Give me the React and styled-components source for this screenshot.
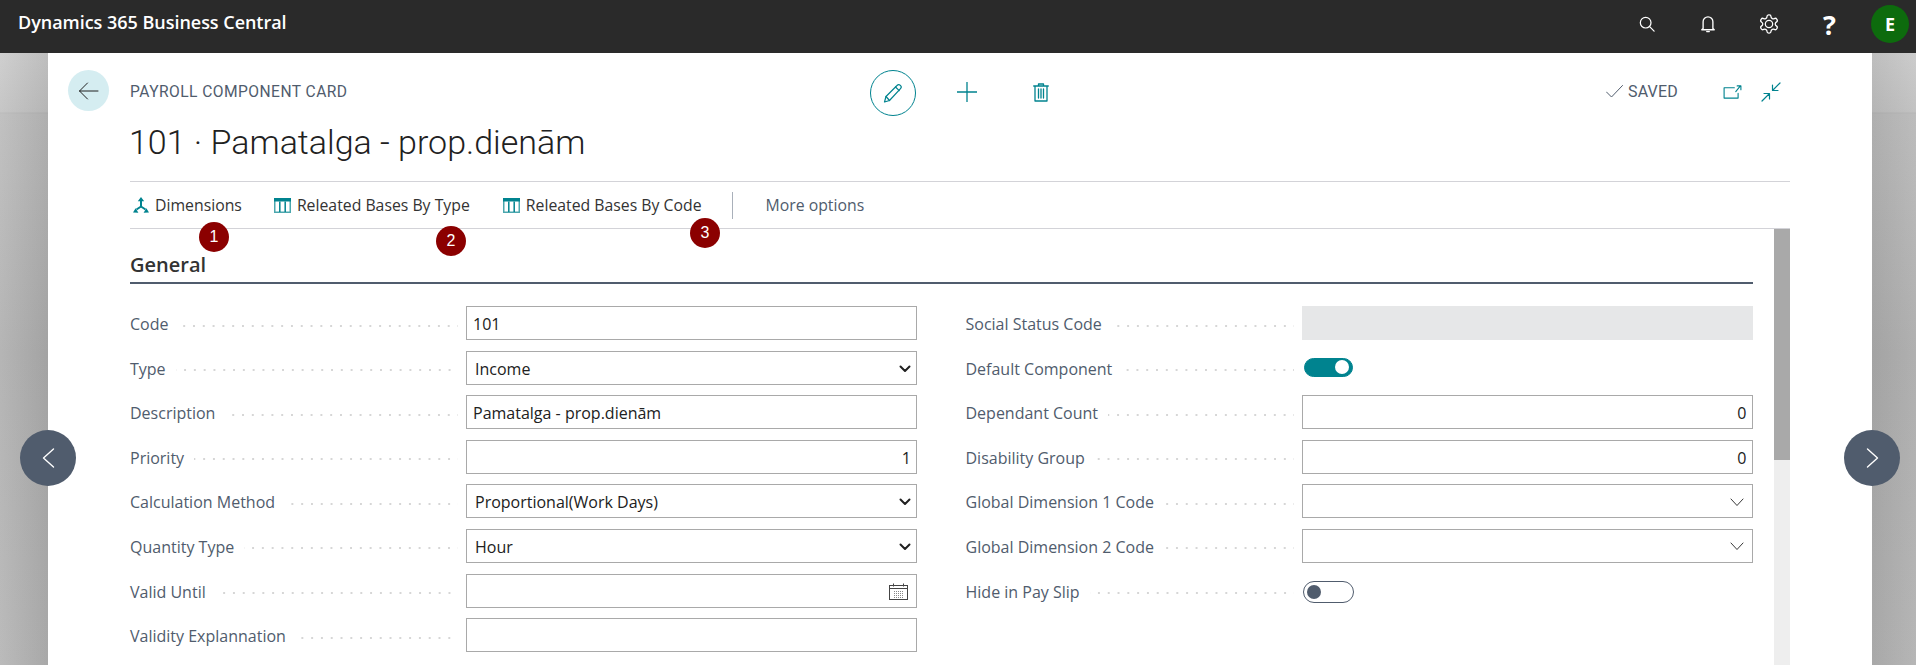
import React from "react";
import styled, { createGlobalStyle } from "styled-components";

const Global = createGlobalStyle`
  html, body { margin: 0; padding: 0; height: 100%; overflow: hidden; background: #bbb; }
  * { box-sizing: border-box; }
  body { font-family: "Open Sans", "Liberation Sans", sans-serif; }
`;

const Page = styled.div`
  width: 1916px; height: 665px; display: flex; flex-direction: column; overflow: hidden;
`;
const TopBar = styled.header`
  height: 53px; flex: none; background: #2a2a2a; display: flex; align-items: center;
  padding: 0 7px 0 18px; color: #fff; position: relative; z-index: 3;
`;
const Brand = styled.div`
  font-size: 18px; font-weight: 600; flex: 1; margin-top: -9px; letter-spacing: -.03px;
`;
const TopIcons = styled.div`display: flex; align-items: center;`;
const TopIcon = styled.div`
  width: 61px; height: 38px; display: flex; align-items: center; justify-content: center;
  color: #fff; margin-top: -5px; font-size: 27px; font-weight: 700;
`;
const Avatar = styled.div`
  width: 38px; height: 38px; border-radius: 50%; background: #0d6b0d; color: #fff; font-weight: 700;
  font-size: 18px; display: flex; align-items: center; justify-content: center; margin: -5px 0 0 11px;
`;
const Backdrop = styled.main`
  flex: 1; min-height: 0; position: relative; padding: 0 44px 0 48px; display: flex;
  background:
    linear-gradient(90deg, rgba(255,255,255,.1), rgba(0,0,0,.06) 48px, rgba(0,0,0,.06) 1872px, rgba(255,255,255,.04)),
    linear-gradient(180deg, #cacaca 0, #c0c0c0 59px, #b4b4b4 60px, #bababa 61px, #adadad 300px, #b3b3b3 100%);
`;
const NavButton = styled.button`
  position: absolute; top: 377px; ${p => p.$side}: ${p => p.$offset}px; width: 56px; height: 56px; border: 0;
  border-radius: 50%; background: #505c6d; color: #fff; display: flex; align-items: center; justify-content: center;
  padding: 0; z-index: 2;
`;
const Card = styled.section`
  flex: 1; background: #fff; display: flex; flex-direction: column; min-width: 0;
`;
const HeaderRow = styled.div`
  margin-top: 17px; padding: 0 20px; height: 46px; display: grid; grid-template-columns: 1fr auto 1fr; align-items: center;
`;
const HeaderLeft = styled.div`display: flex; align-items: center; gap: 21px; align-self: start;`;
const BackButton = styled.button`
  width: 41px; height: 41px; border: 0; border-radius: 50%; background: #d5edf1; color: #212121; padding: 0;
  display: flex; align-items: center; justify-content: center;
`;
const Caption = styled.div`
  font-family: Roboto, "Liberation Sans", sans-serif; font-size: 15.6px; color: #505c6d; letter-spacing: .45px; margin-top: 2px;
`;
const CenterTools = styled.div`display: flex; align-items: center; margin-right: 2px;`;
const EditCircle = styled.button`
  width: 46px; height: 46px; border-radius: 50%; border: 1px solid #00838f; background: #fff; color: #00838f;
  padding: 0; display: flex; align-items: center; justify-content: center;
`;
const ToolIcon = styled.div`
  display: flex; color: #00838f; margin-left: ${p => p.$gap}px; margin-top: ${p => p.$top ?? -2}px;
`;
const HeaderRight = styled.div`
  display: flex; align-items: center; justify-content: flex-end; margin-right: 71px; margin-top: -4px; color: #505c6d;
`;
const Saved = styled.div`
  font-family: Roboto, "Liberation Sans", sans-serif; font-size: 16px; letter-spacing: .2px; margin: 0 45px 0 5px;
`;
const Title = styled.h1`
  margin: 3px 0 0 81px; height: 62px; font-family: Roboto, "Noto Sans", sans-serif; font-weight: 300; font-size: 34px; line-height: 46px; color: #212121;
`;
const ActionBar = styled.nav`
  position: relative; margin: 0 82px; height: 48px; border-top: 1px solid #d3d3d8; border-bottom: 1px solid #d3d3d8;
  display: flex; align-items: center; padding-left: 3px; font-size: 15.8px; color: #333; flex: none;
`;
const Action = styled.div`
  display: flex; align-items: center; gap: ${p => p.$gap || 6}px; margin-right: ${p => p.$mr}px; white-space: nowrap;
`;
const Separator = styled.div`
  width: 1px; height: 27px; background: #a9b0ba; margin-right: 33px;
`;
const MoreOptions = styled.div`color: #505c6d;`;
const Badge = styled.div`
  position: absolute; left: ${p => p.$x}px; top: ${p => p.$y}px; width: 30px; height: 30px; border-radius: 50%;
  background: #8b0000; color: #fff; font-family: "Liberation Sans", sans-serif; font-size: 16px;
  display: flex; align-items: center; justify-content: center; z-index: 2;
`;
const Body = styled.div`
  flex: 1; min-height: 0; display: flex; padding-right: 82px;
`;
const Content = styled.div`
  flex: 1; padding: 0 21px 0 82px; min-width: 0;
`;
const SectionTitle = styled.h2`
  margin: 18px 0 22px; height: 37px; border-bottom: 2px solid #505c6d; font-size: 20px; font-weight: 600; line-height: 36px; color: #333;
`;
const Columns = styled.div`display: grid; grid-template-columns: 1fr 1fr; column-gap: 48px;`;
const Column = styled.div`display: grid; grid-auto-rows: 44.6px;`;
const Row = styled.div`display: grid; grid-template-columns: 336px 451px; height: 34px;`;
const Label = styled.div`
  display: flex; align-items: center; font-size: 16px; color: #505c6d; white-space: nowrap; padding: 2px 8px 0 0; gap: 10px;
`;
const Leader = styled.span`
  flex: 1; height: 2px; margin-top: 3px;
  background: radial-gradient(circle at 1px 1px, #d6d6d6 1px, transparent 1.2px) right center / 9.8px 2px repeat-x;
`;
const Field = styled.div`
  height: 34px; border: 1px solid #a9a9a9; background: ${p => p.$disabled ? "#e6e7e8" : "#fff"};
  border-color: ${p => p.$disabled ? "#e6e7e8" : "#a9a9a9"};
  display: flex; align-items: center; justify-content: ${p => p.$end ? "flex-end" : "space-between"};
  padding: 2px ${p => p.$pr ?? 5}px 0 ${p => p.$pl ?? 6}px; font-size: 16px; color: #212121;
`;
const Toggle = styled.div`
  width: ${p => p.$on ? 49 : 51}px; height: ${p => p.$on ? 19 : 22}px; border-radius: 11px; margin: ${p => p.$on ? "7px 0 0 2px" : "7px 0 0 1px"};
  border: 1px solid ${p => p.$on ? "#00838f" : "#505c6d"}; background: ${p => p.$on ? "#00838f" : "#fff"};
  display: flex; align-items: center; justify-content: ${p => p.$on ? "flex-end" : "flex-start"}; padding: 0 3px;
`;
const Knob = styled.span`
  width: 14px; height: 14px; border-radius: 50%; background: ${p => p.$on ? "#fff" : "#505c6d"};
`;
const Scrollbar = styled.div`width: 16px; flex: none; background: #eee;`;
const Thumb = styled.div`height: 231px; background: #a9a9a9;`;

const Svg = ({ w, h, vb, children, sw = 1.2 }) => (
  <svg width={w} height={h} viewBox={vb} fill="none" stroke="currentColor" strokeWidth={sw} strokeLinecap="round" strokeLinejoin="round">{children}</svg>
);
const Chevron = ({ dir }) => (
  <Svg w={13} h={20} vb="0 0 13 20" sw={1.4}>
    {dir === "left" ? <path d="M11.5 1 1.5 10l10 9" /> : <path d="m1.5 1 10 9-10 9" />}
  </Svg>
);
const BackArrow = () => <Svg w={21} h={18} vb="0 0 21 18" sw={1}><path d="M20 9H1.5M9.5 1 1.5 9l8 8" /></Svg>;
const Search = () => <Svg w={16} h={16} vb="0 0 18 18" sw={1.4}><circle cx="7.5" cy="7.5" r="6" /><path d="m12 12 5 5" /></Svg>;
const Bell = () => <Svg w={16} h={18} vb="0 0 18 20" sw={1.5}><path d="M3.5 15V7.5a5.5 5.5 0 0 1 11 0V15l1.5 1.5H2L3.5 15Z" /><path d="M7.5 18.5h3" /></Svg>;
const Gear = () => (
  <Svg w={22} h={22} vb="0 0 24 24" sw={1.4}>
    <path d="M12.22 2h-.44a2 2 0 0 0-2 2v.18a2 2 0 0 1-1 1.73l-.43.25a2 2 0 0 1-2 0l-.15-.08a2 2 0 0 0-2.73.73l-.22.38a2 2 0 0 0 .73 2.73l.15.1a2 2 0 0 1 1 1.72v.51a2 2 0 0 1-1 1.74l-.15.09a2 2 0 0 0-.73 2.73l.22.38a2 2 0 0 0 2.73.73l.15-.08a2 2 0 0 1 2 0l.43.25a2 2 0 0 1 1 1.73V20a2 2 0 0 0 2 2h.44a2 2 0 0 0 2-2v-.18a2 2 0 0 1 1-1.73l.43-.25a2 2 0 0 1 2 0l.15.08a2 2 0 0 0 2.73-.73l.22-.39a2 2 0 0 0-.73-2.73l-.15-.08a2 2 0 0 1-1-1.74v-.5a2 2 0 0 1 1-1.74l.15-.09a2 2 0 0 0 .73-2.73l-.22-.38a2 2 0 0 0-2.73-.73l-.15.08a2 2 0 0 1-2 0l-.43-.25a2 2 0 0 1-1-1.73V4a2 2 0 0 0-2-2z" />
    <circle cx="12" cy="12" r="4" />
  </Svg>
);
const Pencil = () => (
  <Svg w={20} h={21} vb="0 0 20 21" sw={1.2}>
    <path d="M1.5 19 3 13.5 14 2.5a1.9 1.9 0 0 1 3.5 3.2L6.5 17.5 1.5 19Z" /><path d="m3 13.5 3.5 4M12.5 4l3.7 3.6" />
  </Svg>
);
const Plus = () => <Svg w={20} h={20} vb="0 0 20 20" sw={1.3}><path d="M10 0v20M0 10h20" /></Svg>;
const Trash = () => (
  <Svg w={16} h={19} vb="0 0 16 19" sw={1.3}>
    <path d="M.7 3h14.6M5.5 3V1h5v2M2 3v15h12V3M5.5 6v9M8 6v9M10.5 6v9" />
  </Svg>
);
const Check = () => <Svg w={17} h={13} vb="0 0 17 13" sw={1}><path d="m.5 7 5 5L16.5 .5" /></Svg>;
const OpenNew = () => (
  <Svg w={19} h={14} vb="0 0 20 15" sw={1.2}><path d="M12 3H1v11h15V9" /><path d="m13.5 7 4.5-5.5M15 1h4v4" /></Svg>
);
const Collapse = () => (
  <Svg w={20} h={20} vb="0 0 20 20" sw={1.2}>
    <path d="m19 1-7 7M11.5 3v5.5H17M1 19l7-7M3 11.5h5.5V17" />
  </Svg>
);
const DimensionsIcon = () => (
  <svg width="16" height="16" viewBox="0 0 16 16" fill="#00838f" stroke="#00838f" strokeWidth="2">
    <path d="M8 9.5V3M8 9.5 3.5 12.5M8 9.5l4.5 3" fill="none" />
    <path d="M8 0 4.8 4.2h6.4L8 0ZM0 15.6l5.4.2-2.8-4.6L0 15.6ZM16 15.6l-5.4.2 2.8-4.6 2.6 4.4Z" stroke="none" />
  </svg>
);
const TableIcon = () => (
  <svg width="17" height="15" viewBox="0 0 17 15" fill="none">
    <rect x=".75" y=".75" width="15.5" height="13.5" stroke="#4ba7ae" strokeWidth="1.5" />
    <rect x="0" y="0" width="17" height="3.5" fill="#00838f" />
    <path d="M5.8 3.5V14M11.2 3.5V14" stroke="#00838f" strokeWidth="1.5" />
  </svg>
);
const SelectArrow = ({ thin }) => thin
  ? <Svg w={14} h={9} vb="0 0 14 9" sw={.9}><path d="m1 1 6 6.5L13 1" /></Svg>
  : <Svg w={12} h={8} vb="0 0 12 8" sw={2}><path d="m1.5 1.5 4.5 4.5 4.5-4.5" /></Svg>;
const Calendar = () => (
  <svg width="19" height="17" viewBox="0 0 19 17" fill="none" stroke="#444" strokeWidth="1">
    <rect x=".5" y="2.5" width="18" height="14" />
    <path d="M.5 5.5h18M4.5 .5v3M14.5 .5v3" />
    <path d="M5 8.5h10M5 10.5h10M5 12.5h10M5 14.5h10" stroke="#888" strokeDasharray="1 1" />
  </svg>
);

const FieldRow = ({ label, children }) => (
  <Row>
    <Label>{label}<Leader /></Label>
    {children}
  </Row>
);

export default function App() {
  return (
    <Page>
      <Global />
      <TopBar>
        <Brand>Dynamics 365 Business Central</Brand>
        <TopIcons>
          <TopIcon><Search /></TopIcon>
          <TopIcon><Bell /></TopIcon>
          <TopIcon><Gear /></TopIcon>
          <TopIcon>?</TopIcon>
          <Avatar>E</Avatar>
        </TopIcons>
      </TopBar>
      <Backdrop>
        <NavButton $side="left" $offset={20}><Chevron dir="left" /></NavButton>
        <NavButton $side="right" $offset={16}><Chevron dir="right" /></NavButton>
        <Card>
          <HeaderRow>
            <HeaderLeft>
              <BackButton><BackArrow /></BackButton>
              <Caption>PAYROLL COMPONENT CARD</Caption>
            </HeaderLeft>
            <CenterTools>
              <EditCircle><Pencil /></EditCircle>
              <ToolIcon $gap={41}><Plus /></ToolIcon>
              <ToolIcon $gap={56}><Trash /></ToolIcon>
            </CenterTools>
            <HeaderRight>
              <Check />
              <Saved>SAVED</Saved>
              <ToolIcon $gap={0} $top={2}><OpenNew /></ToolIcon>
              <ToolIcon $gap={19} $top={2}><Collapse /></ToolIcon>
            </HeaderRight>
          </HeaderRow>
          <Title>101 · Pamatalga - prop.dienām</Title>
          <ActionBar>
            <Action $mr={32}><DimensionsIcon />Dimensions</Action>
            <Action $mr={33}><TableIcon />Releated Bases By Type</Action>
            <Action $mr={30}><TableIcon />Releated Bases By Code</Action>
            <Separator />
            <MoreOptions>More options</MoreOptions>
            <Badge $x={69} $y={40}>1</Badge>
            <Badge $x={306} $y={44}>2</Badge>
            <Badge $x={560} $y={36}>3</Badge>
          </ActionBar>
          <Body>
            <Content>
              <SectionTitle>General</SectionTitle>
              <Columns>
                <Column>
                  <FieldRow label="Code"><Field>101</Field></FieldRow>
                  <FieldRow label="Type"><Field $pl={8}>Income<SelectArrow /></Field></FieldRow>
                  <FieldRow label="Description"><Field>Pamatalga - prop.dienām</Field></FieldRow>
                  <FieldRow label="Priority"><Field $end>1</Field></FieldRow>
                  <FieldRow label="Calculation Method"><Field $pl={8}>Proportional(Work Days)<SelectArrow /></Field></FieldRow>
                  <FieldRow label="Quantity Type"><Field $pl={8}>Hour<SelectArrow /></Field></FieldRow>
                  <FieldRow label="Valid Until"><Field $end $pr={8}><Calendar /></Field></FieldRow>
                  <FieldRow label="Validity Explannation"><Field /></FieldRow>
                </Column>
                <Column>
                  <FieldRow label="Social Status Code"><Field $disabled /></FieldRow>
                  <FieldRow label="Default Component"><Toggle $on><Knob $on /></Toggle></FieldRow>
                  <FieldRow label="Dependant Count"><Field $end>0</Field></FieldRow>
                  <FieldRow label="Disability Group"><Field $end>0</Field></FieldRow>
                  <FieldRow label="Global Dimension 1 Code"><Field $end $pr={8}><SelectArrow thin /></Field></FieldRow>
                  <FieldRow label="Global Dimension 2 Code"><Field $end $pr={8}><SelectArrow thin /></Field></FieldRow>
                  <FieldRow label="Hide in Pay Slip"><Toggle><Knob /></Toggle></FieldRow>
                </Column>
              </Columns>
            </Content>
            <Scrollbar><Thumb /></Scrollbar>
          </Body>
        </Card>
      </Backdrop>
    </Page>
  );
}
